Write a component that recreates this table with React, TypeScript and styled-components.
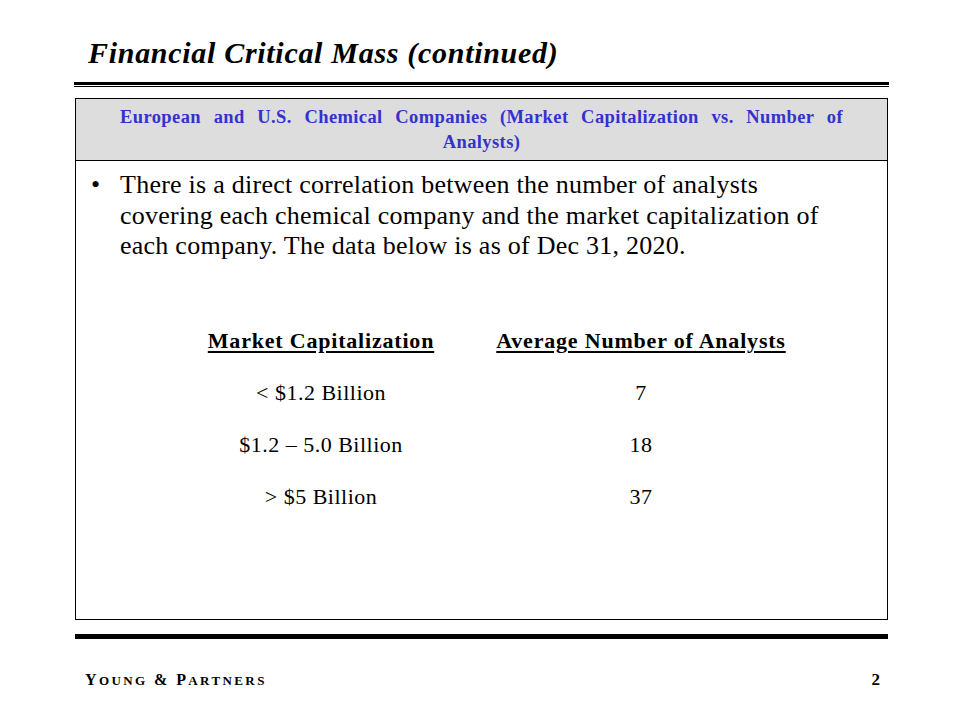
import React from "react";
import styled, { createGlobalStyle } from "styled-components";

const Global = createGlobalStyle`
  html, body { margin: 0; padding: 0; background: #ffffff; }
  body { font-family: "Liberation Serif", "Times New Roman", serif; color: #000; }
`;

const Page = styled.div`
  width: 960px;
  height: 720px;
  display: flex;
  flex-direction: column;
  background: #fff;
  overflow: hidden;
`;

const Title = styled.h1`
  margin: 0;
  padding: 37px 0 0 88px;
  height: 32px;
  font-size: 30px;
  line-height: 32px;
  font-weight: bold;
  font-style: italic;
  letter-spacing: 0.7px;
  white-space: nowrap;
`;

const DoubleRule = styled.div`
  margin: 13px 0 0 74px;
  width: 815px;
  height: 5px;
  box-sizing: border-box;
  border-top: 3px solid #000;
  border-bottom: 1px solid #000;
`;

const Panel = styled.section`
  margin: 11px 0 0 75px;
  width: 813px;
  height: 522px;
  box-sizing: border-box;
  border: 1px solid #000;
  display: flex;
  flex-direction: column;
`;

const PanelHeader = styled.div`
  height: 62px;
  box-sizing: border-box;
  background: #dddddd;
  border-bottom: 1px solid #000;
  padding: 6px 44px 0;
  color: #3333cc;
  font-weight: bold;
  font-size: 18.5px;
  line-height: 25px;
  letter-spacing: 0.4px;
  text-align: justify;
  text-align-last: center;
`;

const Bullets = styled.ul`
  list-style: none;
  margin: 0;
  padding: 9px 30px 0 44px;
`;

const Bullet = styled.li`
  position: relative;
  font-size: 26px;
  line-height: 30.5px;
  letter-spacing: 0.25px;
  white-space: nowrap;
  &::before {
    content: "•";
    position: absolute;
    left: -29px;
    top: 0;
  }
`;

const Table = styled.div`
  margin-top: 53px;
  display: grid;
  grid-template-columns: 320px 320px;
  justify-content: center;
  margin-right: 1px;
`;

const Cell = styled.div<{ $head?: boolean }>`
  text-align: center;
  font-size: 22px;
  line-height: 52px;
  font-weight: ${(p) => (p.$head ? "bold" : "normal")};
  letter-spacing: ${(p) => (p.$head ? "0.8px" : "0.5px")};
  text-decoration: ${(p) => (p.$head ? "underline" : "none")};
  text-underline-offset: 3px;
  white-space: nowrap;
`;

const FooterRule = styled.div`
  margin: 14px 0 0 75px;
  width: 813px;
  height: 5px;
  background: #000;
`;

const Footer = styled.footer`
  margin: 31px 0 0 85px;
  width: 795px;
  display: flex;
  justify-content: space-between;
  align-items: baseline;
  font-weight: bold;
  line-height: 20px;
`;

const Firm = styled.span`
  font-size: 16px;
  letter-spacing: 2.4px;
  white-space: nowrap;
`;

const Cap = styled.span`
  font-size: 16px;
`;

const Small = styled.span`
  font-size: 13px;
  text-transform: uppercase;
`;

const PageNo = styled.span`
  font-size: 17px;
`;

const rows: [string, string][] = [
  ["< $1.2 Billion", "7"],
  ["$1.2 – 5.0 Billion", "18"],
  ["> $5 Billion", "37"],
];

export default function App() {
  return (
    <Page>
      <Global />
      <Title>Financial Critical Mass (continued)</Title>
      <DoubleRule />
      <Panel>
        <PanelHeader>
          European and U.S. Chemical Companies (Market Capitalization vs. Number of Analysts)
        </PanelHeader>
        <Bullets>
          <Bullet>
            There is a direct correlation between the number of analysts
            <br />
            covering each chemical company and the market capitalization of
            <br />
            each company. The data below is as of Dec 31, 2020.
          </Bullet>
        </Bullets>
        <Table>
          <Cell $head>Market Capitalization</Cell>
          <Cell $head>Average Number of Analysts</Cell>
          {rows.map(([cap, n]) => (
            <React.Fragment key={cap}>
              <Cell>{cap}</Cell>
              <Cell>{n}</Cell>
            </React.Fragment>
          ))}
        </Table>
      </Panel>
      <FooterRule />
      <Footer>
        <Firm>
          <Cap>Y</Cap>
          <Small>oung</Small> <Cap>&amp;</Cap> <Cap>P</Cap>
          <Small>artners</Small>
        </Firm>
        <PageNo>2</PageNo>
      </Footer>
    </Page>
  );
}
